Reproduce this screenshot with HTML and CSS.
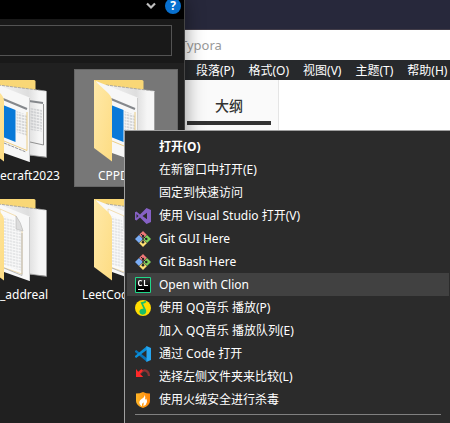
FILE: index.html
```html
<!DOCTYPE html>
<html lang="zh-CN">
<head>
<meta charset="utf-8">
<title>Desktop</title>
<link rel="stylesheet" href="styles.css">
</head>
<body>
<svg class="defs" aria-hidden="true">
  <defs>
    <linearGradient id="flap" x1="0" y1="0" x2="1" y2="1"><stop offset="0" stop-color="#ffe9a8"/><stop offset="1" stop-color="#fddc83"/></linearGradient>
    <linearGradient id="sheet" x1="0" y1="0" x2="1" y2="0"><stop offset="0" stop-color="#f4f4f4"/><stop offset=".62" stop-color="#dedede"/><stop offset=".85" stop-color="#f6f6f6"/></linearGradient>
    <linearGradient id="fire" x1="0" y1="0" x2="1" y2="0"><stop offset="0" stop-color="#ffb526"/><stop offset="1" stop-color="#ff8508"/></linearGradient>
    <linearGradient id="ink" x1="0" y1="0" x2="0" y2="1"><stop offset="0" stop-color="#3a3a3a"/><stop offset=".7" stop-color="#000"/></linearGradient>
    <pattern id="lines" width="3" height="3" patternUnits="userSpaceOnUse" patternTransform="skewY(12)"><path d="M0 1h2.500" stroke="#b4b7bb" stroke-width="1"/></pattern>
    <symbol id="folder-base" viewBox="0 0 62 84">
      <path d="M0 0h48q1.500 0 1.500 1.500V68H0z" fill="#f9d776"/>
      <path d="M12 5l48.500 6v66L40 75z" fill="url(#sheet)"/>
      <path d="M12 5l48 6" stroke="#999" stroke-dasharray="3 1" stroke-width=".8" fill="none"/>
      <path d="M60.500 12v65.500L44 75" stroke="#999" stroke-width=".8" fill="none"/>
    </symbol>
    <symbol id="folder-doc" viewBox="0 0 62 84">
      <use href="#folder-base"/>
      <path d="M43 21l14 2" stroke="#85888c" stroke-width="2"/>
      <path d="M44 28l12 1.500v22L44 50z" fill="url(#lines)"/>
      <path d="M57.500 24v41L44 62" stroke="#777" stroke-width=".8" fill="none"/>
      <path d="M2 1l41.500 16.500V82L18 73z" fill="#f7f7f7"/>
      <path d="M43.500 18v64" stroke="#ccc"/>
      <path d="M17 19l24 10" stroke="#85888c" stroke-width="2"/>
      <path d="M17 25l12.500 5V62L17 57z" fill="#0879d8"/>
      <path d="M30.500 31l10.500 4v21l-10.500-4z" fill="url(#lines)"/>
      <path d="M18 61l23 9.500V32" stroke="#e9c36a" stroke-width=".8" fill="none"/>
      <path d="M18 63l22 9" stroke="#777" stroke-dasharray="3 1" stroke-width=".8" fill="none"/>
      <path d="M0 0l14 13q4 4 4 8v60.500L0 68z" fill="url(#flap)"/>
    </symbol>
    <symbol id="folder-clean" viewBox="0 0 62 84">
      <use href="#folder-base"/>
      <path d="M2 1l41.500 16.500V82L18 73z" fill="#f7f7f7"/>
      <path d="M43.500 18v64" stroke="#ccc"/>
      <path d="M17 19l24 10" stroke="#85888c" stroke-width="2"/>
      <path d="M17 25l12.500 5V62L17 57z" fill="#0879d8"/>
      <path d="M30.500 31l10.500 4v21l-10.500-4z" fill="url(#lines)"/>
      <path d="M18 61l23 9.500V32" stroke="#e9c36a" stroke-width=".8" fill="none"/>
      <path d="M0 0l14 13q4 4 4 8v60.500L0 68z" fill="url(#flap)"/>
    </symbol>
    <symbol id="folder-text" viewBox="0 0 62 84">
      <use href="#folder-base"/>
      <path d="M2 1l41.500 16.500V82L18 73z" fill="#f8f8f8"/>
      <path d="M43.500 18v64" stroke="#ccc"/>
      <path d="M14 10l16 7 6 13v45L16 68z" fill="#fafafa" stroke="#eccb82" stroke-width=".6"/>
      <path d="M14 16l14 5 1 9 7 2v40L16 65z" fill="url(#lines)" opacity=".6"/>
      <path d="M30 17v13l7 2q-2-9-7-15z" fill="#dcdcdc" stroke="#b7b7b7" stroke-width=".6"/>
      <path d="M18 69l18 7.500V34" stroke="#aaa" fill="none" stroke-width=".8"/>
      <path d="M0 0l14 13q4 4 4 8v60.500L0 68z" fill="url(#flap)"/>
    </symbol>
    <symbol id="git" viewBox="0 0 16 16">
      <path d="M8 0l3.800 3.800L8 7.600 4.200 3.800z" fill="#f07878"/>
      <path d="M4 4l4 4-4 4-4-4z" fill="#7badf5"/>
      <path d="M12 4l4 4-4 4-4-4z" fill="#80d25b"/>
      <path d="M8 8.400l3.800 3.800L8 16l-3.800-3.800z" fill="#ffe173"/>
      <path d="M6 3l2 2v7M8 5l3 3" stroke="#24282b" stroke-width="1" fill="none"/>
      <circle cx="8" cy="5" r="1.200" fill="#24282b"/><circle cx="11.300" cy="8" r="1.200" fill="#24282b"/><circle cx="8" cy="11.300" r="1.300" fill="#24282b"/>
    </symbol>
  </defs>
</svg>

<main class="desktop">
  <section class="typora" aria-label="Typora">
    <header class="typora-title">Typora</header>
    <nav class="typora-menu">
      <button type="button">段落(P)</button>
      <button type="button">格式(O)</button>
      <button type="button">视图(V)</button>
      <button type="button">主题(T)</button>
      <button type="button">帮助(H)</button>
    </nav>
    <div class="typora-body">
      <aside class="outline"><h2>大纲</h2></aside>
      <article class="page"></article>
    </div>
  </section>

  <section class="explorer" aria-label="Explorer">
    <header class="ribbon">
      <button type="button" class="expand" aria-label="展开功能区"><svg width="12" height="8" viewBox="0 0 12 8"><path d="M2 1.500l4 4 4-4" fill="none" stroke="#c0c0c0" stroke-width="2.200"/></svg></button>
      <button type="button" class="help">?</button>
    </header>
    <div class="search"><input type="text" aria-label="搜索"></div>
    <div class="files">
      <figure class="file clipped"><svg class="folder"><use href="#folder-doc"/></svg><figcaption>ecraft2023</figcaption></figure>
      <figure class="file selected"><svg class="folder"><use href="#folder-clean"/></svg><figcaption>CPPDemo</figcaption></figure>
      <figure class="file clipped"><svg class="folder"><use href="#folder-text"/></svg><figcaption>_addreal</figcaption></figure>
      <figure class="file"><svg class="folder"><use href="#folder-text"/></svg><figcaption>LeetCodeSolver</figcaption></figure>
    </div>
  </section>

  <div class="menu" role="menu">
    <button type="button" role="menuitem" class="default"><span class="icon"></span>打开(O)</button>
    <button type="button" role="menuitem"><span class="icon"></span>在新窗口中打开(E)</button>
    <button type="button" role="menuitem"><span class="icon"></span>固定到快速访问</button>
    <button type="button" role="menuitem"><svg class="icon" viewBox="0 0 16 16"><path fill-rule="evenodd" d="M0 4.200L1.500 3.500 5 6.400 11.500 0 16 2v12l-4.500 2L5 9.600 1.500 12.500 0 11.800zM1.500 6v4l2-2zM12 4.800L7.500 8l4.500 3.200z" fill="#8661c5"/></svg>使用 Visual Studio 打开(V)</button>
    <button type="button" role="menuitem"><svg class="icon"><use href="#git"/></svg>Git GUI Here</button>
    <button type="button" role="menuitem"><svg class="icon"><use href="#git"/></svg>Git Bash Here</button>
    <button type="button" role="menuitem" class="active"><svg class="icon" viewBox="0 0 16 16"><path d="M.5.500h15v15H.5z" fill="url(#ink)" stroke="#21d789"/><path d="M7 4.200Q6.300 3.500 5.300 3.500 3.500 3.500 3.500 6t1.800 2.500Q6.300 8.500 7 7.800M9.500 3v5.500h3.500M3 12.500h6" fill="none" stroke="#fff" stroke-width="1.200"/></svg>Open with Clion</button>
    <button type="button" role="menuitem"><svg class="icon" viewBox="0 0 16 16"><circle cx="8" cy="8" r="8" fill="#ffdc00"/><path d="M5.500 2.200Q8 2.400 10.500.800L11.500 2Q9.500 3.500 8 3.800l3 6.200q.8 3-1.500 4.300-2.800 1-4.500-.8-1.500-2.300.3-4 1.500-1.200 3.200-.7z" fill="#17bd68"/></svg>使用 QQ音乐 播放(P)</button>
    <button type="button" role="menuitem"><span class="icon"></span>加入 QQ音乐 播放队列(E)</button>
    <button type="button" role="menuitem"><svg class="icon" viewBox="0 0 16 16"><path d="M0 5l1.200-1L12 12.200V16L0 6z" fill="#0873b8"/><path d="M0 11l1.200 1L12 3.800V0L0 10z" fill="#0a8ed8"/><path d="M11.500 0L16 2v12l-4.500 2z" fill="#27a5ef"/></svg>通过 Code 打开</button>
    <button type="button" role="menuitem"><svg class="icon" viewBox="0 0 16 16"><path d="M5.500 4Q8.500.300 11.500 2q2.300 1.300 2.500 5" fill="none" stroke="#873333" stroke-width="2.200"/><path d="M1 0l2.200 2.800L6.500 0l1.300 1.600L5.200 5l3 3H1z" fill="#ff2929"/></svg>选择左侧文件夹来比较(L)</button>
    <button type="button" role="menuitem"><svg class="icon" viewBox="0 0 16 16"><path d="M1 1.500Q5 1.500 8 0q3 1.500 7 1.500V9q0 4.500-7 7-7-2.500-7-7z" fill="url(#fire)"/><path d="M9.500 2.500Q10 5 6.500 7 3 9.500 5 12.500q.7 1.200 2 1.800-.8-2.300 1.500-4 .5 1.700-.2 3.700Q11.500 13 12 10q.2-2-.8-3.500-.5 1-1.200 1.200.8-3-.5-5.200z" fill="#fff"/></svg>使用火绒安全进行杀毒</button>
    <hr>
  </div>
</main>
</body>
</html>
```
FILE: styles.css
```css
* {
  box-sizing: border-box;
}

body {
  margin: 0;
  font: 12px/16px "Noto Sans", "Noto Sans CJK SC", sans-serif;
  color: #fff;
}

button {
  padding: 0;
  border: 0;
  background: none;
  color: inherit;
  font: inherit;
  white-space: nowrap;
}

.defs {
  position: absolute;
  width: 0;
  height: 0;
}

.desktop {
  position: relative;
  height: 100vh;
  overflow: hidden;
  background: #27283b;
}

/* Editor window */
.typora {
  position: absolute;
  inset: 29px 0 0 180px;
  display: flex;
  flex-direction: column;
  border-top: 1px solid #413c48;
  background: #fff;
}

.typora-title {
  height: 30px;
  font-size: 13px;
  line-height: 30px;
  color: #999;
}

.typora-menu {
  display: flex;
  gap: 14px;
  height: 20px;
  padding: 2px 0 0 16px;
  background: #27292c;
}

.typora-body {
  display: flex;
  flex: 1;
}

.outline {
  width: 99px;
  padding: 16px 7px 0;
  border-right: 1px solid #e5e5e5;
  background: #fafafa;
}

.outline h2 {
  margin: 0;
  padding-bottom: 5px;
  border-bottom: 4px solid #333;
  color: #333;
  font-size: 14px;
  font-weight: 500;
  line-height: 20px;
  text-align: center;
}

/* File explorer window */
.explorer {
  position: absolute;
  inset: 0 auto 0 0;
  width: 185px;
  display: flex;
  flex-direction: column;
  overflow: hidden;
  border-right: 1px solid #444;
  background: #202020;
  box-shadow: 0 0 18px rgba(0, 0, 0, 0.45);
}

.ribbon {
  display: flex;
  justify-content: flex-end;
  align-items: center;
  gap: 8px;
  height: 19px;
  padding: 0 3px 7px 0;
  background: #000;
}

.ribbon .expand {
  display: flex;
}

.ribbon .help {
  width: 16px;
  height: 16px;
  border-radius: 50%;
  background: #0870cf;
  font-size: 12px;
  font-weight: 700;
}

.search {
  height: 44px;
  padding: 6px 12px 8px 0;
  background: #191919;
}

.search input {
  width: 100%;
  height: 31px;
  border: 1px solid #535353;
  border-left: 0;
  background: transparent;
  color: #fff;
}

.files {
  display: grid;
  grid-template-columns: 1fr 104px;
  grid-auto-rows: 118px;
  gap: 1px 4px;
  padding: 6px 6px 0 0;
}

.file {
  margin: 0;
  padding-top: 10px;
  border: 1px solid transparent;
}

.file.selected {
  border-color: #666;
  background: #777;
}

.folder {
  display: block;
  width: 62px;
  height: 84px;
  margin: 0 auto 2px 19px;
}

.file figcaption {
  font-size: 12px;
  line-height: 20px;
  text-align: center;
}

/* Column partly scrolled out on the left */
.file.clipped {
  border-left: 0;
}

.clipped .folder {
  margin-left: -14px;
}

.clipped figcaption {
  text-align: left;
}

/* Context menu */
.menu {
  position: absolute;
  inset: 130px -2px 0 124px;
  display: flex;
  flex-direction: column;
  padding: 4px 2px;
  border: 1px solid #a0a0a0;
  border-bottom: 0;
  background: #2b2b2b;
}

.menu button {
  display: flex;
  align-items: center;
  flex: none;
  gap: 8px;
  height: 23px;
  padding-left: 8px;
}

.menu .default {
  font-weight: 700;
}

.menu .active {
  background: #414141;
}

.icon {
  width: 16px;
  height: 16px;
}

.menu hr {
  width: auto;
  margin: 3px 8px;
  border: 0;
  border-top: 1px solid #808080;
}
```
